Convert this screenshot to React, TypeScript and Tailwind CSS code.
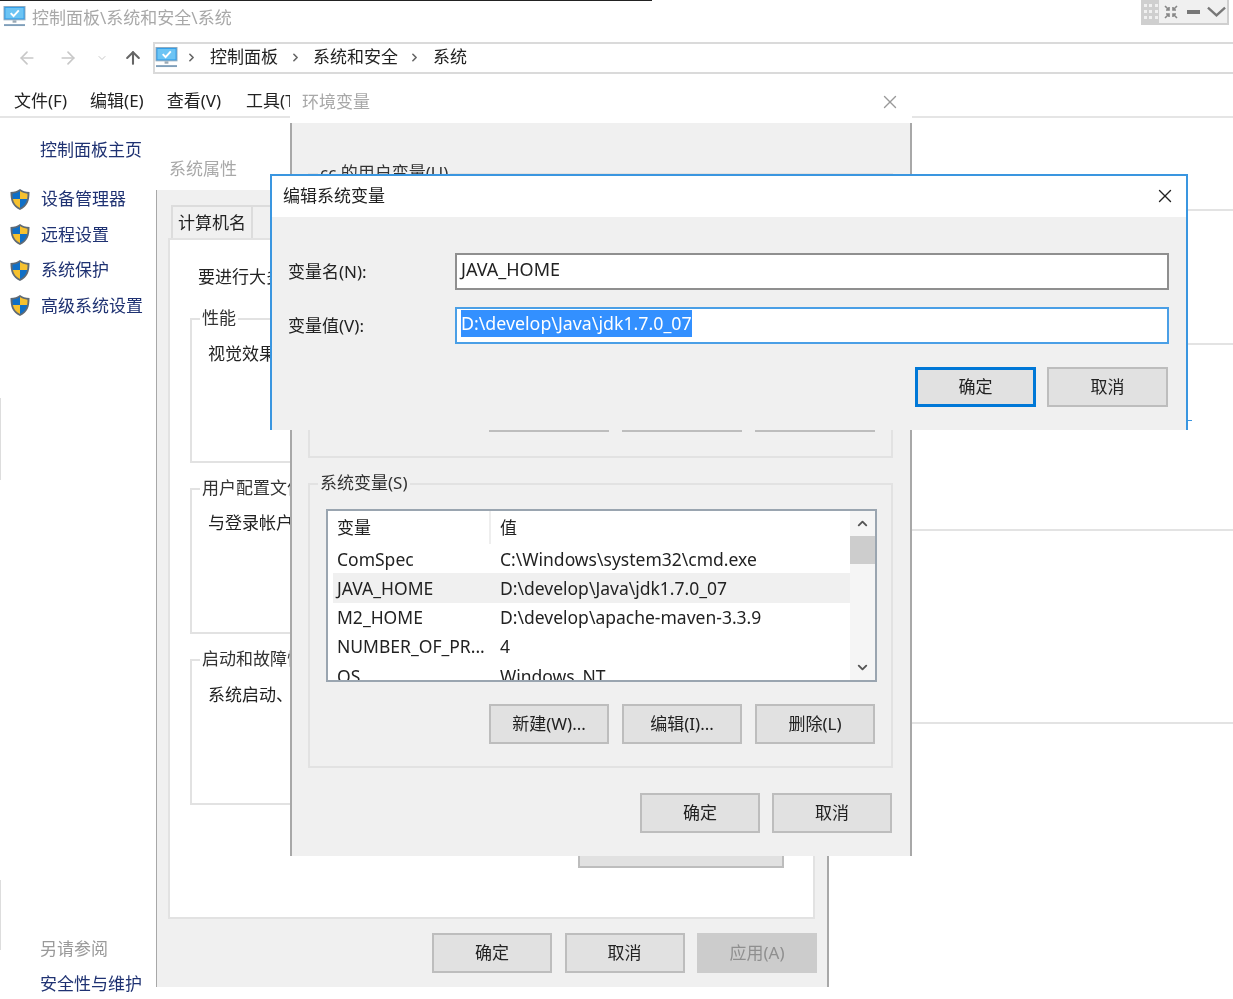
import { ArrowLeft, ArrowRight, ArrowUp, ChevronDown, ChevronRight, ChevronUp, X } from "lucide-react";

function MonitorIcon({ className }: { className?: string }) {
  return (
    <svg viewBox="0 0 24 22" className={className}>
      <rect x="1" y="0.5" width="22" height="14" fill="#2f9be8" stroke="#8fa9bd" />
      <rect x="2.5" y="2" width="19" height="11" fill="#6cc4f4" />
      <path d="M8 7.5l3 3 5.5-6" fill="none" stroke="#fff" strokeWidth="2" />
      <rect x="10" y="15" width="4" height="2.5" fill="#9aa9b5" />
      <rect x="1" y="19" width="22" height="2" fill="#7f9fba" />
    </svg>
  );
}

function ShieldIcon() {
  return (
    <svg viewBox="0 0 20 22" className="h-[23px] w-[20px] shrink-0">
      <path d="M10 .5C7.500 2.500 4.500 3.300.5 3.500c0 8.500 1.500 14 9.500 18 8-4 9.500-9.500 9.500-18-4-.2-7-1-9.500-3z" fill="#5f6a75" />
      <path d="M10 2.500C8 4 5.500 4.800 2.500 5.200c0 1.800.1 3.500.4 5.300H10z" fill="#0f6fc6" />
      <path d="M10 2.500c2 1.500 4.500 2.300 7.500 2.700 0 1.800-.1 3.500-.4 5.300H10z" fill="#f6c12f" />
      <path d="M2.900 10.500c.8 4 2.800 6.800 7.100 9v-9z" fill="#f6c12f" />
      <path d="M17.100 10.500c-.8 4-2.800 6.800-7.100 9v-9z" fill="#0f6fc6" />
    </svg>
  );
}

function Btn({ label, width = "w-[120px]", primary, disabled }: { label: string; width?: string; primary?: boolean; disabled?: boolean }) {
  const tone = primary
    ? "border-[3px] border-[#0078d7] bg-[#e1e1e1] text-[#222]"
    : disabled
      ? "border-2 border-[#cccccc] bg-[#cccccc] text-[#8f8f8f]"
      : "border-2 border-[#bdbdbd] bg-[#e1e1e1] text-[#222]";
  return <div className={`flex h-[40px] shrink-0 items-center justify-center text-[17px] ${width} ${tone}`}>{label}</div>;
}

function Group({ legend, legendLeft, className, children }: { legend: string; legendLeft: string; className?: string; children?: React.ReactNode }) {
  return (
    <div className={`relative border-2 border-[#e2e2e2] ${className ?? ""}`}>
      <span className={`absolute top-[-14px] whitespace-nowrap bg-inherit px-[2px] text-[17px] leading-[24px] text-[#333] ${legendLeft}`}>{legend}</span>
      {children}
    </div>
  );
}

const sideLinks = ["设备管理器", "远程设置", "系统保护", "高级系统设置"];

const rows = [
  ["ComSpec", "C:\\Windows\\system32\\cmd.exe"],
  ["JAVA_HOME", "D:\\develop\\Java\\jdk1.7.0_07"],
  ["M2_HOME", "D:\\develop\\apache-maven-3.3.9"],
  ["NUMBER_OF_PR...", "4"],
  ["OS", "Windows_NT"],
];

function Explorer() {
  return (
    <div className="flex h-full flex-col">
      <div className="flex h-[42px] items-start pl-[3px] pt-[6px]">
        <MonitorIcon className="h-[21px] w-[23px]" />
        <span className="ml-[6px] text-[17px] leading-[23px] text-[#a8a8a8]">控制面板\系统和安全\系统</span>
      </div>
      <div className="flex h-[32px] items-center">
        <ArrowLeft size={20} strokeWidth={2} className="ml-[17px] text-[#c8c8c8]" />
        <ArrowRight size={20} strokeWidth={2} className="ml-[21px] text-[#c8c8c8]" />
        <ChevronDown size={12} strokeWidth={2} className="ml-[18px] text-[#c8c8c8]" />
        <ArrowUp size={20} strokeWidth={2.5} className="ml-[15px] text-[#666]" />
        <div className="ml-[10px] flex h-full flex-1 items-center border-2 border-r-0 border-[#dadada] pb-[2px] text-[17px] text-[#222]">
          <MonitorIcon className="h-[21px] w-[23px]" />
          <ChevronRight size={13} strokeWidth={3} className="ml-[7px] text-[#666]" />
          <span className="ml-[12px]">控制面板</span>
          <ChevronRight size={13} strokeWidth={3} className="ml-[11px] text-[#666]" />
          <span className="ml-[11px]">系统和安全</span>
          <ChevronRight size={13} strokeWidth={3} className="ml-[10px] text-[#666]" />
          <span className="ml-[12px]">系统</span>
        </div>
      </div>
      <div className="flex h-[44px] items-center gap-[23px] border-b-2 border-[#e5e5e5] pl-[14px] pt-[11px] text-[17px] text-[#222]">
        <span>文件(F)</span>
        <span>编辑(E)</span>
        <span>查看(V)</span>
        <span className="ml-[2px]">工具(T)</span>
      </div>
      <div className="flex w-[156px] flex-1 flex-col pb-[3px] text-[17px] text-[#1f3272]">
        <span className="ml-[40px] mt-[20px] leading-[24px]">控制面板主页</span>
        <div className="mt-[25px] flex flex-col gap-[11.500px]">
          {sideLinks.map((link) => (
            <div key={link} className="flex h-[24px] items-center pl-[10px]">
              <ShieldIcon />
              <span className="ml-[11px] whitespace-nowrap">{link}</span>
            </div>
          ))}
        </div>
        <span className="ml-[40px] mt-auto leading-[24px] text-[#9a9a9a]">另请参阅</span>
        <span className="ml-[40px] mt-[11px] leading-[24px]">安全性与维护</span>
      </div>
    </div>
  );
}

function SystemProperties() {
  return (
    <div className="absolute left-[157px] top-[147px] flex h-[840px] w-[672px] flex-col border-r-2 border-[#a8a8a8] bg-[#f0f0f0]">
      <div className="flex h-[43px] shrink-0 items-center bg-white pl-[12px] text-[17px] text-[#a8a8a8]">系统属性</div>
      <div className="ml-[14px] mt-[15px] flex h-[33px] text-[17px] text-[#222]">
        <div className="flex w-[82px] items-center justify-center border-2 border-b-0 border-[#dcdcdc]">计算机名</div>
        <div className="flex w-[82px] items-center justify-center border-2 border-b-0 border-l-0 border-[#dcdcdc]">硬件</div>
      </div>
      <div className="ml-[11px] flex h-[681px] w-[647px] flex-col border-2 border-[#e2e2e2] bg-white pl-[20px] text-[17px] text-[#222]">
        <span className="ml-[8px] mt-[25px] whitespace-nowrap leading-[24px]">要进行大多数更改</span>
        <Group legend="性能" legendLeft="left-[8px]" className="mt-[29px] h-[145px] w-[605px] bg-white">
          <p className="ml-[16px] mt-[22px] whitespace-nowrap leading-[24px]">视觉效果</p>
        </Group>
        <Group legend="用户配置文件" legendLeft="left-[8px]" className="mt-[25px] h-[146px] w-[605px] bg-white">
          <p className="ml-[16px] mt-[21px] whitespace-nowrap leading-[24px]">与登录帐户</p>
        </Group>
        <Group legend="启动和故障恢复" legendLeft="left-[8px]" className="mt-[25px] h-[146px] w-[605px] bg-white">
          <p className="ml-[16px] mt-[22px] whitespace-nowrap leading-[24px]">系统启动、</p>
        </Group>
        <div className="ml-[388px] mt-[23px]">
          <Btn label="环境变量" width="w-[206px]" />
        </div>
      </div>
      <div className="ml-[275px] mt-[14px] flex gap-[12.500px]">
        <Btn label="确定" />
        <Btn label="取消" />
        <Btn label="应用(A)" disabled />
      </div>
    </div>
  );
}

function VariableList() {
  return (
    <div className="ml-[16px] flex h-[173px] w-[551px] overflow-hidden border-2 border-[#9aa5b0] bg-white text-[17.500px] text-[#222]">
      <div className="w-[522px] shrink-0 pl-[5px]">
        <div className="flex h-[33px] items-center">
          <span className="flex h-full w-[158px] items-center border-r-2 border-[#eeeeee] pl-[4px] text-[17px]">变量</span>
          <span className="pl-[9px] text-[17px]">值</span>
        </div>
        {rows.map(([name, value]) => (
          <div key={name} className={`flex h-[29.300px] items-center whitespace-nowrap pl-[4px] ${name === "JAVA_HOME" ? "bg-[#f0f0f0]" : ""}`}>
            <span className="w-[163px]">{name}</span>
            <span>{value}</span>
          </div>
        ))}
      </div>
      <div className="flex flex-1 flex-col items-center bg-[#f5f5f5] text-[#555]">
        <ChevronUp size={15} strokeWidth={3} className="mt-[5px]" />
        <div className="mt-[5px] h-[28px] w-full bg-[#cdcdcd]" />
        <ChevronDown size={15} strokeWidth={3} className="mb-[5px] mt-auto" />
      </div>
    </div>
  );
}

function EnvironmentVariables() {
  return (
    <div className="absolute left-[290px] top-[80px] flex h-[776px] w-[622px] flex-col">
      <div className="flex h-[43px] shrink-0 items-center justify-between bg-white pl-[12px] pr-[11px] text-[17px] text-[#a8a8a8]">
        <span>环境变量</span>
        <X size={22} strokeWidth={1.5} className="text-[#999]" />
      </div>
      <div className="flex flex-1 flex-col border-x-2 border-[#a8a8a8] bg-[#f0f0f0]">
        <Group legend="cc 的用户变量(U)" legendLeft="left-[8px]" className="ml-[16px] mt-[50px] h-[285px] w-[585px] bg-[#f0f0f0]">
          <div className="flex justify-end gap-[13px] pr-[16px] pt-[217px]">
            <Btn label="新建(N)..." />
            <Btn label="编辑(E)..." />
            <Btn label="删除(D)" />
          </div>
        </Group>
        <Group legend="系统变量(S)" legendLeft="left-[8px]" className="ml-[16px] mt-[25px] h-[285px] w-[585px] bg-[#f0f0f0]">
          <div className="pt-[24px]">
            <VariableList />
          </div>
          <div className="mt-[22px] flex justify-end gap-[13px] pr-[16px]">
            <Btn label="新建(W)..." />
            <Btn label="编辑(I)..." />
            <Btn label="删除(L)" />
          </div>
        </Group>
        <div className="ml-[348px] mt-[25px] flex gap-[12px]">
          <Btn label="确定" />
          <Btn label="取消" />
        </div>
      </div>
    </div>
  );
}

function EditDialog() {
  return (
    <div className="absolute left-[270px] top-[174px] flex h-[256px] w-[918px] flex-col border-x-2 border-t-2 border-[#3a96e0] bg-[#f0f0f0] text-[17px] text-[#222]">
      <div className="flex h-[41px] shrink-0 items-center justify-between bg-white pb-[2px] pl-[11px] pr-[10px]">
        <span>编辑系统变量</span>
        <X size={22} strokeWidth={1.5} className="text-[#222]" />
      </div>
      <div className="grid grid-cols-[167px_714px] gap-y-[17px] pl-[16px] pt-[36px]">
        <span className="self-center">变量名(N):</span>
        <div className="flex h-[37px] items-center border-2 border-[#8f8f8f] bg-white pb-[4px] pl-[4px] text-[18px]">JAVA_HOME</div>
        <span className="self-center">变量值(V):</span>
        <div className="flex h-[37px] items-center border-2 border-[#4a9fe6] bg-white pb-[4px] pl-[4px] text-[17.800px]">
          <span className="bg-[#3390ff] text-white">D:\develop\Java\jdk1.7.0_07</span>
        </div>
      </div>
      <div className="mt-[23px] flex justify-end gap-[11px] pr-[18px]">
        <Btn label="确定" width="w-[121px]" primary />
        <Btn label="取消" width="w-[121px]" />
      </div>
    </div>
  );
}

function TitleControls() {
  return (
    <div className="absolute left-[1141px] top-0 flex h-[25px] w-[88px] items-center border-2 border-t-0 border-[#cfcfcf] bg-[#f0f0f0] text-[#777]">
      <div className="grid h-full w-[16px] grid-cols-3 content-center justify-items-center gap-y-[3px] bg-[#cfcfcf]">
        {Array.from({ length: 9 }).map((_, i) => (
          <span key={i} className="h-[3px] w-[3px] bg-[#f0f0f0]" />
        ))}
      </div>
      <svg viewBox="0 0 14 14" className="ml-[5px] h-[14px] w-[14px]" fill="none" stroke="#888" strokeWidth="1.600">
        <path d="M1 1l4 4M5 2v3H2M13 1L9 5M9 2v3h3M1 13l4-4M5 12V9H2M13 13L9 9M9 12V9h3" />
      </svg>
      <span className="ml-[9px] h-[4px] w-[13px] bg-[#777]" />
      <svg viewBox="0 0 20 12" className="ml-[7px] h-[12px] w-[19px]" fill="none" stroke="#777" strokeWidth="2.500">
        <path d="M1 1.500l9 8 9-8" />
      </svg>
    </div>
  );
}

export default function App() {
  return (
    <div className="relative h-[999px] w-[1233px] overflow-hidden bg-white font-['Noto_Sans','Noto_Sans_CJK_SC',sans-serif] blur-[0.5px]">
      <Explorer />
      <div className="absolute left-0 top-0 h-[1px] w-[652px] bg-[#222]" />
      <div className="absolute left-0 top-[398px] h-[82px] w-[1px] bg-[#dddddd]" />
      <div className="absolute left-0 top-[880px] h-[70px] w-[1px] bg-[#dddddd]" />
      <div className="absolute left-[156px] top-[190px] h-[797px] w-[2px] bg-[#a8a8a8]" />
      <div className="absolute right-0 top-[209px] h-[2px] w-[321px] bg-[#e3e3e3]" />
      <div className="absolute right-0 top-[343px] h-[2px] w-[321px] bg-[#e3e3e3]" />
      <div className="absolute right-0 top-[529px] h-[2px] w-[321px] bg-[#e3e3e3]" />
      <div className="absolute right-0 top-[722px] h-[2px] w-[321px] bg-[#e3e3e3]" />
      <div className="absolute left-[1188px] top-[420px] h-[1px] w-[4px] bg-[#3a96e0]" />
      <TitleControls />
      <SystemProperties />
      <EnvironmentVariables />
      <EditDialog />
    </div>
  );
}
